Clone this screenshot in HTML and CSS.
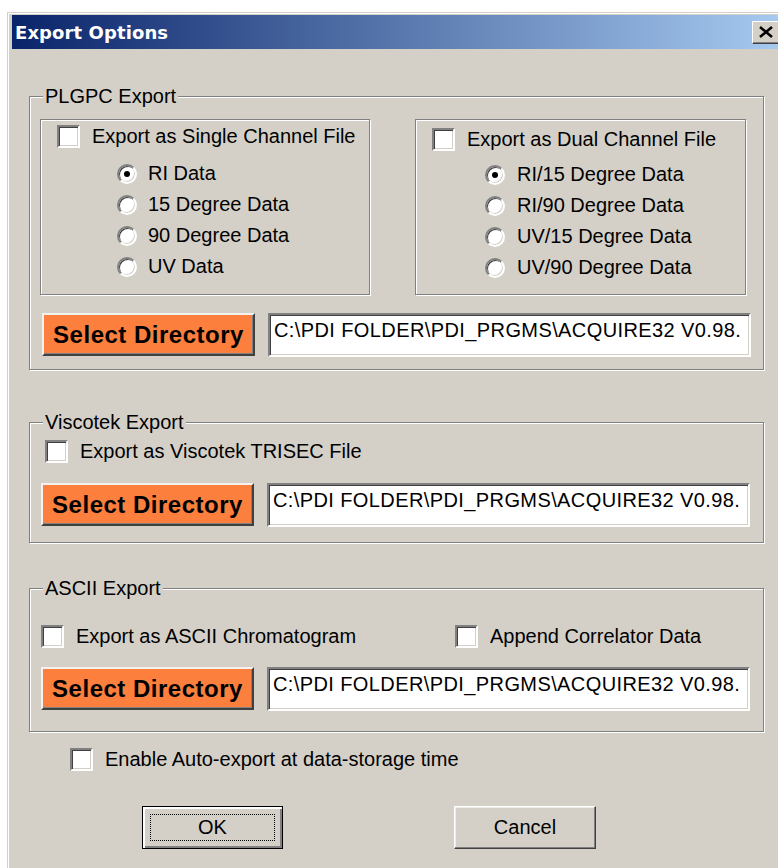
FILE: index.html
```html
<!DOCTYPE html>
<html lang="en">
<head>
<meta charset="utf-8">
<title>Export Options</title>
<link rel="stylesheet" href="styles.css">
</head>
<body>
<div class="window">
  <div class="titlebar">
    <span class="title">Export Options</span>
    <span class="close-btn">
      <svg width="16" height="12" viewBox="0 0 16 12"><path d="M2 1 L14 11 M14 1 L2 11" stroke="#000" stroke-width="2.6" fill="none"/></svg>
    </span>
  </div>

  <div class="content">
    <div class="group group-plgpc">
      <span class="legend">PLGPC Export</span>
      <div class="channels">
        <div class="box box-single">
          <label class="check-row"><span class="checkbox"></span><span>Export as Single Channel File</span></label>
          <div class="radio-list">
            <div class="radio-row"><span class="radio checked"></span><span>RI Data</span></div>
            <div class="radio-row"><span class="radio"></span><span>15 Degree Data</span></div>
            <div class="radio-row"><span class="radio"></span><span>90 Degree Data</span></div>
            <div class="radio-row"><span class="radio"></span><span>UV Data</span></div>
          </div>
        </div>
        <div class="box box-dual">
          <label class="check-row"><span class="checkbox"></span><span>Export as Dual Channel File</span></label>
          <div class="radio-list">
            <div class="radio-row"><span class="radio checked"></span><span>RI/15 Degree Data</span></div>
            <div class="radio-row"><span class="radio"></span><span>RI/90 Degree Data</span></div>
            <div class="radio-row"><span class="radio"></span><span>UV/15 Degree Data</span></div>
            <div class="radio-row"><span class="radio"></span><span>UV/90 Degree Data</span></div>
          </div>
        </div>
      </div>
      <div class="dir-row">
        <span class="dir-btn">Select Directory</span>
        <span class="path-field">C:\PDI FOLDER\PDI_PRGMS\ACQUIRE32 V0.98.</span>
      </div>
    </div>

    <div class="group group-visco">
      <span class="legend">Viscotek Export</span>
      <label class="check-row"><span class="checkbox"></span><span>Export as Viscotek TRISEC File</span></label>
      <div class="dir-row">
        <span class="dir-btn">Select Directory</span>
        <span class="path-field">C:\PDI FOLDER\PDI_PRGMS\ACQUIRE32 V0.98.</span>
      </div>
    </div>

    <div class="group group-ascii">
      <span class="legend">ASCII Export</span>
      <div class="ascii-checks">
        <label class="check-row"><span class="checkbox"></span><span>Export as ASCII Chromatogram</span></label>
        <label class="check-row"><span class="checkbox"></span><span>Append Correlator Data</span></label>
      </div>
      <div class="dir-row">
        <span class="dir-btn">Select Directory</span>
        <span class="path-field">C:\PDI FOLDER\PDI_PRGMS\ACQUIRE32 V0.98.</span>
      </div>
    </div>

    <label class="check-row auto-row"><span class="checkbox"></span><span>Enable Auto-export at data-storage time</span></label>

    <div class="actions">
      <span class="push-btn default-btn"><span class="focus">OK</span></span>
      <span class="push-btn cancel-btn">Cancel</span>
    </div>
  </div>
</div>
</body>
</html>
```

FILE: styles.css
```css
* {
  box-sizing: border-box;
}

html, body {
  margin: 0;
  padding: 0;
  overflow: hidden;
  background: #ffffff;
}

body {
  font-family: "Liberation Sans", Arial, sans-serif;
  font-size: 20px;
  color: #000;
}

/* dialog frame */
.window {
  width: 790px;
  height: 870px;
  margin: 12px 0 0 7px;
  padding: 2px 0 0 4px;
  background: #d4d0c8;
  border-top: 1px solid #d4d0c8;
  border-left: 1px solid #d4d0c8;
  box-shadow: inset 1px 1px #ffffff;
}

.titlebar {
  width: 770px;
  height: 34px;
  display: flex;
  align-items: center;
  justify-content: space-between;
  padding: 0 2px 0 3px;
  background: linear-gradient(to right, #0a246a, #a6caf0);
}

.title {
  font-family: "DejaVu Sans", Verdana, sans-serif;
  font-weight: bold;
  font-size: 18px;
  color: #ffffff;
  letter-spacing: 0.1px;
}

.close-btn {
  width: 28px;
  height: 23px;
  display: flex;
  align-items: center;
  justify-content: center;
  background: #d4d0c8;
  border: 1px solid;
  border-color: #ffffff #404040 #404040 #ffffff;
  box-shadow: inset -1px -1px #808080;
}

.content {
  padding: 47px 0 0 17px;
}

/* etched group boxes */
.group,
.box {
  position: relative;
  border: 1px solid #808080;
  box-shadow: inset 1px 1px #ffffff, 1px 1px #ffffff;
}

.group {
  width: 735px;
}

.legend {
  position: absolute;
  top: -13px;
  left: 13px;
  padding: 0 2px;
  line-height: 24px;
  background: #d4d0c8;
}

.group-plgpc {
  height: 274px;
  padding: 22px 0 0 10px;
}

.channels {
  display: flex;
  gap: 45px;
}

.box {
  height: 176px;
  padding-left: 16px;
}

.box-single {
  width: 330px;
  padding-top: 4px;
}

.box-dual {
  width: 331px;
  padding-top: 7px;
}

.check-row {
  display: flex;
  align-items: center;
  gap: 12px;
  height: 24px;
  white-space: nowrap;
}

.checkbox {
  flex: none;
  width: 23px;
  height: 23px;
  background: #ffffff;
  border: 2px solid;
  border-color: #808080 #ffffff #ffffff #808080;
  box-shadow: inset 1px 1px #404040, inset -1px -1px #d4d0c8;
}

.radio-list {
  margin-top: 10px;
  padding-left: 60px;
}

.box-dual .radio-list {
  margin-top: 8px;
  padding-left: 53px;
}

.radio-row {
  display: flex;
  align-items: center;
  gap: 11px;
  height: 31px;
  white-space: nowrap;
}

.box-dual .radio-row {
  gap: 12px;
}

.radio {
  flex: none;
  width: 20px;
  height: 20px;
  display: flex;
  align-items: center;
  justify-content: center;
  border-radius: 50%;
  background: #ffffff;
  border: 2px solid;
  border-color: #808080 #ffffff #ffffff #808080;
  box-shadow: inset 1px 1px #404040, inset -1px -1px #d4d0c8;
}

.radio.checked::after {
  content: "";
  width: 6px;
  height: 6px;
  border-radius: 50%;
  background: #000;
}

/* directory picker row */
.dir-row {
  display: flex;
  gap: 13px;
  margin-top: 18px;
  padding-left: 2px;
}

.dir-btn {
  flex: none;
  width: 213px;
  height: 43px;
  display: flex;
  align-items: center;
  justify-content: center;
  background: #fc7f3e;
  font-weight: bold;
  font-size: 24px;
  letter-spacing: 0.5px;
  border: 2px solid;
  border-color: #f4f2ee #404040 #404040 #f4f2ee;
  box-shadow: inset -1px -1px #808080;
}

.path-field {
  width: 483px;
  height: 44px;
  padding: 3px 0 0 4px;
  line-height: 24px;
  letter-spacing: 0.4px;
  white-space: nowrap;
  overflow: hidden;
  background: #ffffff;
  border: 2px solid;
  border-color: #808080 #ffffff #ffffff #808080;
  box-shadow: inset 1px 1px #404040, inset -1px -1px #d4d0c8;
}

.group-visco {
  height: 121px;
  margin-top: 52px;
  padding: 16px 0 0 11px;
}

.group-visco > .check-row {
  padding-left: 4px;
}

.group-visco .dir-row {
  margin-top: 20px;
  padding-left: 0;
}

.group-ascii {
  height: 144px;
  margin-top: 45px;
  padding: 35px 0 0 11px;
}

.ascii-checks {
  display: grid;
  grid-template-columns: 414px auto;
}

.group-ascii .dir-row {
  margin-top: 19px;
  padding-left: 0;
}

.auto-row {
  margin-top: 15px;
  padding-left: 41px;
}

/* dialog buttons */
.actions {
  display: flex;
  margin-top: 35px;
  padding-left: 113px;
}

.push-btn {
  height: 43px;
  display: flex;
  align-items: center;
  justify-content: center;
  background: #d4d0c8;
}

.default-btn {
  width: 141px;
  padding: 7px;
  border: 1px solid #000;
  box-shadow: inset 2px 2px #ffffff, inset -2px -2px #808080;
}

.focus {
  flex: 1;
  align-self: stretch;
  display: flex;
  align-items: center;
  justify-content: center;
  border: 1px dotted #000;
}

.cancel-btn {
  width: 142px;
  margin-left: 171px;
  border: 1px solid;
  border-color: #ffffff #404040 #404040 #ffffff;
  box-shadow: inset -1px -1px #808080, inset 1px 1px #eeece8;
}
```
